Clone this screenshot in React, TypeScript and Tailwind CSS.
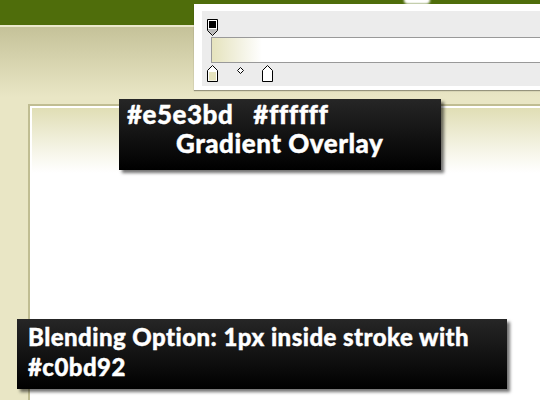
import React from "react";

function TopStop() {
  return (
    <svg width="11" height="17" viewBox="0 0 11 17" className="block shrink-0">
      <path d="M0.5 0.5 H10.5 V11.5 L5.5 16.5 L0.5 11.5 Z" fill="#ffffff" stroke="#000" strokeWidth="1" />
      <rect x="2" y="2" width="7" height="7" fill="#000" />
      <path d="M1 10 H10 V11.3 L5.5 15.8 L1 11.3 Z" fill="#b9b9b9" />
    </svg>
  );
}

function BottomStop({ color }: { color: string }) {
  return (
    <svg width="11" height="17" viewBox="0 0 11 17" className="block shrink-0">
      <path d="M5.5 0.5 L10.5 5.5 V16.5 H0.5 V5.5 Z" fill="#ffffff" stroke="#000" strokeWidth="1" />
      <rect x="2" y="7" width="7" height="8.5" fill={color} />
    </svg>
  );
}

const font = { fontFamily: "Lato, 'Open Sans', sans-serif" };

export default function App() {
  return (
    <div className="relative w-[540px] h-[400px] overflow-hidden flex flex-col bg-[#e9e6c5]">
      {/* header green bar */}
      <div className="h-[25px] bg-[#4f6d0b] shrink-0" />
      <div className="h-[2px] bg-[#ebe8cd] shrink-0" />
      {/* main area */}
      <div className="flex-1 flex flex-col bg-[linear-gradient(to_bottom,#c5c299_0px,#e9e6c5_70px,#e9e6c5_100%)]">
        <div className="flex-1 mt-[77px] ml-[28px] border-2 border-r-0 border-b-0 border-[#c0bd92] p-[2px] pr-0 pb-0 bg-white flex">
          <div className="flex-1 bg-[linear-gradient(to_bottom,#e0deb5_0px,#f7f6ea_45px,#ffffff_65px)]" />
        </div>
      </div>

      {/* small white tab on header */}
      <div className="absolute left-[404px] top-[-4px] w-[26px] h-[8px] rounded-b-[4px] bg-white blur-[1px]" />

      {/* gradient editor panel */}
      <div className="absolute left-[194px] top-[4px] right-[-20px] h-[86px] bg-white shadow-[0_1px_1px_rgba(0,0,0,0.35)] pl-[8px] pt-[7px] pb-[4px]">
        <div className="h-full bg-[#ececec] flex flex-col pl-[5px] pt-[8px]">
          <TopStop />
          <div className="ml-[4px] mt-[1px] h-[26px] border border-r-0 border-[#999999] bg-[linear-gradient(to_right,#e5e3bd_0px,#f3f2e2_28px,#ffffff_50px)]" />
          <div className="flex items-start mt-[2px]">
            <BottomStop color="#e5e3bd" />
            <svg className="block shrink-0 ml-[19px] mt-[2px]" width="7" height="7" viewBox="0 0 7 7">
              <path d="M3.5 0.5 L6.5 3.5 L3.5 6.5 L0.5 3.5 Z" fill="#fff" stroke="#000" strokeWidth="1" />
            </svg>
            <div className="ml-[18px]">
              <BottomStop color="#ffffff" />
            </div>
          </div>
        </div>
      </div>

      {/* label 1 */}
      <div
        className="absolute left-[119px] top-[99px] w-[322px] h-[71px] bg-[linear-gradient(to_bottom,#262626,#000000)] shadow-[3px_3px_3px_rgba(0,0,0,0.55)] text-white font-black text-[26px] leading-[29px] tracking-[0.5px] pt-[1px] [-webkit-text-stroke:0.4px_white]"
        style={font}
      >
        <div className="flex gap-[20px] pl-[8px]">
          <span>#e5e3bd</span>
          <span>#ffffff</span>
        </div>
        <div className="pl-[57px]">Gradient Overlay</div>
      </div>

      {/* label 2 */}
      <div
        className="absolute left-[17px] top-[319px] w-[490px] h-[70px] bg-[linear-gradient(to_bottom,#262626,#000000)] shadow-[3px_3px_3px_rgba(0,0,0,0.55)] text-white font-black text-[24px] leading-[30px] tracking-[0.45px] pl-[11px] pt-[3px] [-webkit-text-stroke:0.4px_white]"
        style={font}
      >
        <div>Blending Option: 1px inside stroke with</div>
        <div>#c0bd92</div>
      </div>
    </div>
  );
}
